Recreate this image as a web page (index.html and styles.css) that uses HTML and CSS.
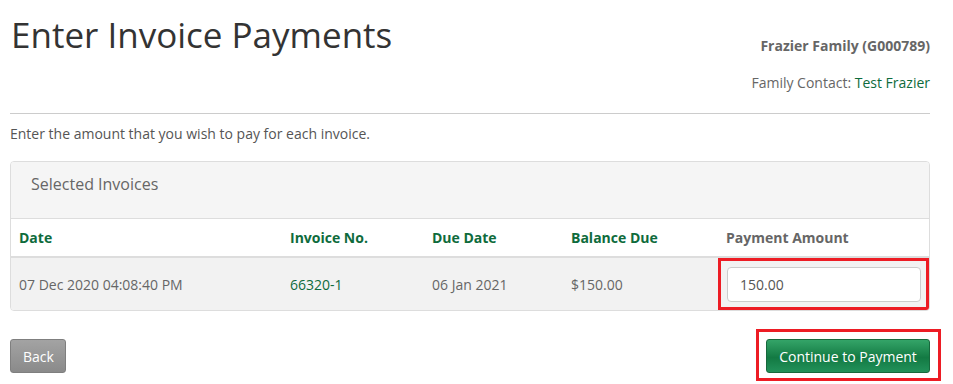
FILE: index.html
```html
<!DOCTYPE html>
<html lang="en">
<head>
    <meta charset="UTF-8">
    <title>Enter Invoice Payments</title>
    <link rel="stylesheet" href="styles.css">
</head>
<body>

    <div class="page">
        <header class="page-header">
            <h1>Enter Invoice Payments</h1>
            <div class="family-info">
                <p class="family-name">Frazier Family (G000789)</p>
                <p class="family-contact">Family Contact: <a href="#">Test Frazier</a></p>
            </div>
        </header>

        <hr>

        <p class="intro">Enter the amount that you wish to pay for each invoice.</p>

        <div class="panel">
            <div class="panel-heading">Selected Invoices</div>
            <table class="invoices">
                <colgroup>
                    <col class="col-date">
                    <col class="col-invoice">
                    <col class="col-due">
                    <col class="col-balance">
                    <col class="col-amount">
                </colgroup>
                <thead>
                    <tr>
                        <th>Date</th>
                        <th>Invoice No.</th>
                        <th>Due Date</th>
                        <th>Balance Due</th>
                        <th class="muted">Payment Amount</th>
                    </tr>
                </thead>
                <tbody>
                    <tr>
                        <td>07 Dec 2020 04:08:40 PM</td>
                        <td><a href="#">66320-1</a></td>
                        <td>06 Jan 2021</td>
                        <td>$150.00</td>
                        <td class="amount-cell">
                            <div class="highlight">
                                <input type="text" value="150.00">
                            </div>
                        </td>
                    </tr>
                </tbody>
            </table>
        </div>

        <div class="actions">
            <button type="button" class="btn btn-back">Back</button>
            <div class="highlight highlight-btn">
                <button type="button" class="btn btn-continue">Continue to Payment</button>
            </div>
        </div>
    </div>

</body>
</html>
```

FILE: styles.css
```css
body {
    margin: 0;
    font-family: 'Open Sans', 'Liberation Sans', sans-serif;
    font-size: 14px;
    color: #666;
    background: #fff;
}

.page {
    width: 920px;
    padding-left: 10px;
}

a {
    color: #0e6b3c;
    text-decoration: none;
}

.page-header {
    display: flex;
    justify-content: space-between;
    align-items: flex-start;
}

h1 {
    margin: 16px 0 0 1px;
    font-size: 35px;
    font-weight: 400;
    line-height: 1.1;
    color: #333;
}

.family-info {
    text-align: right;
    padding-top: 36px;
}

.family-info p {
    margin: 0;
    line-height: 20px;
}

.family-name {
    font-weight: bold;
}

.family-contact {
    margin-top: 17px !important;
}

hr {
    margin: 20px 0 0;
    border: none;
    border-top: 1px solid #ccc;
}

.intro {
    margin: 10px 0 0;
    line-height: 20px;
    color: #555;
}

.panel {
    margin-top: 17px;
    border: 1px solid #ddd;
    border-radius: 4px;
    overflow: hidden;
}

.panel-heading {
    background: #f5f5f5;
    border-bottom: 1px solid #ddd;
    padding: 11px 20px 0;
    height: 45px;
    font-size: 16px;
    line-height: 22px;
    color: #666;
}

.invoices {
    width: 100%;
    border-collapse: collapse;
    table-layout: fixed;
}

.col-date { width: 271px; }
.col-invoice { width: 142px; }
.col-due { width: 139px; }
.col-balance { width: 155px; }

.invoices th {
    text-align: left;
    height: 37px;
    padding: 0 8px;
    font-weight: bold;
    color: #0e6b3c;
    border-bottom: 2px solid #ddd;
    background: #fff;
}

.invoices th.muted {
    color: #666;
}

.invoices td {
    height: 52px;
    padding: 0 8px;
    background: #f2f2f2;
    color: #666;
}

.invoices td.amount-cell {
    padding: 0;
}

.highlight {
    border: 3px solid #ed1c24;
}

.amount-cell .highlight {
    padding: 6px 5px 5px 6px;
}

.amount-cell input {
    box-sizing: border-box;
    width: 100%;
    height: 35px;
    padding: 0 12px;
    border: 1px solid #ccc;
    border-radius: 4px;
    font-family: inherit;
    font-size: 14px;
    color: #555;
    background: #fff;
}

.actions {
    display: flex;
    justify-content: space-between;
    align-items: flex-start;
    margin-top: 18px;
}

.btn {
    height: 34px;
    padding: 0 12px;
    border-radius: 3px;
    font-family: inherit;
    font-size: 14px;
    color: #fff;
    cursor: pointer;
}

.btn-back {
    margin-top: 10px;
    width: 56px;
    border: 1px solid #7f7f7f;
    background: linear-gradient(#a3a3a3, #8a8a8a);
}

.highlight-btn {
    padding: 7px 8px 5px 7px;
    margin-right: -11px;
}

.btn-continue {
    display: block;
    width: 164px;
    border: 1px solid #17683c;
    background: linear-gradient(#34a468, #137a43 55%, #22915a);
}
```
